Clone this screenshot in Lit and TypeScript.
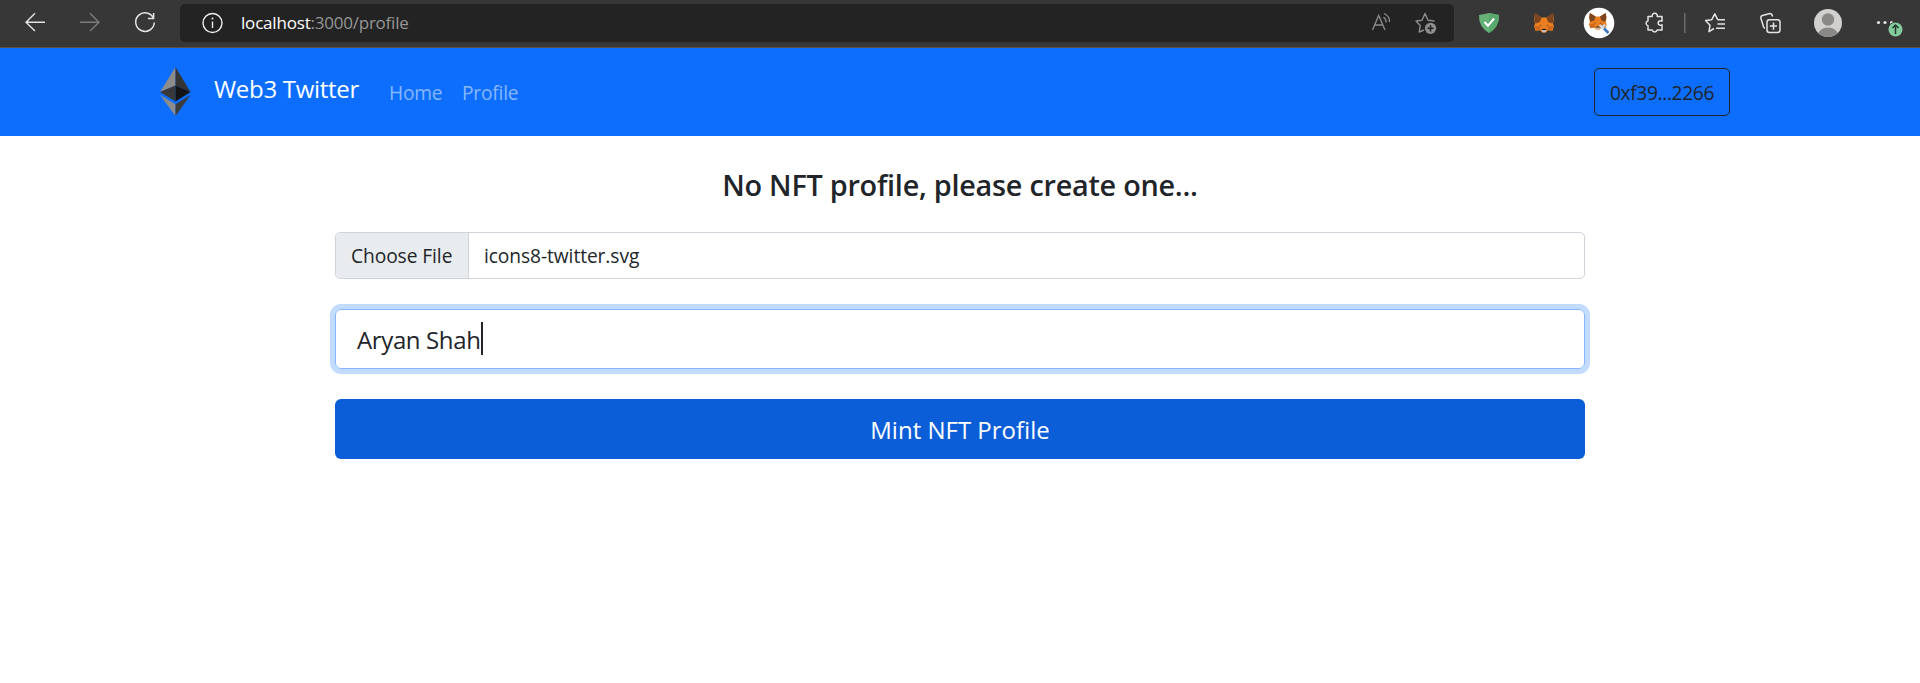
import { LitElement, html, css, svg } from "lit";
import { customElement } from "lit/decorators.js";

const fox = svg`
  <path fill="#ea7f22" d="M1 .5L7.500 4.500h5L19 .5l1 5.500-1 4.500 1 3L18.300 18l-4.500-.8-1.800 2.300H8l-1.800-2.300-4.500.8L0 13.500l1-3L0 6z"/>
  <path fill="#7d4420" d="M1 .5l6.500 4L6 9l-4.500 1.500L.3 6zM19 .5l-6.500 4L14 9l4.500 1.500L19.700 6z"/>
  <path fill="#cf6a1c" d="M.5 13.500L6 12.500l1 4-5.300 1.500zM19.500 13.500L14 12.500l-1 4 5.300 1.500z"/>
  <path fill="#5a3a2a" d="M5.500 11.300l2.300.9-.3.9zM14.500 11.300l-2.300.9.3.9z"/>
  <path fill="#2a2c33" d="M8.300 15.800h3.400l.5 1.500H7.800z"/>
  <path fill="#d0c4ba" d="M7.500 17.300h5l-.8 2H8.300z"/>`;

@customElement("browser-bar")
class BrowserBar extends LitElement {
  static styles = css`
    :host { display: flex; box-sizing: border-box; height: 48px; padding: 4px 0 5px; background: #373737; border-bottom: 1px solid #5c5148; font-family: "Open Sans", "Noto Sans", sans-serif; }
    svg { display: block; overflow: visible; flex: none; }
    .nav { display: flex; width: 180px; padding: 8px 0 0 25px; box-sizing: border-box; gap: 35px; }
    .field { display: flex; width: 1274px; height: 38px; box-sizing: border-box; border-radius: 5px; background: #232323; padding: 8px 18px 0 22px; align-items: flex-start; }
    .url { flex: 1; font-size: 17px; line-height: 25px; margin-left: 18px; margin-top: -2px; color: #969696; white-space: nowrap; }
    .host { color: #fff; letter-spacing: -0.190px; }
    .path { letter-spacing: -0.230px; }
    .read { margin-right: 25px; }
    .tools { display: flex; flex: 1; height: 38px; align-items: center; padding-left: 24px; }
    .shield { margin-right: 34px; }
    .fox { margin-right: 30px; }
    .flask { margin-right: 31px; }
    .puzzle { margin-right: 19px; }
    .rule { margin-right: 19px; }
    .favs { margin-right: 34px; }
    .collections { margin-right: 33px; }
    .avatar { margin-right: 35px; }
  `;
  render() {
    return html`
      <div class="nav">
        <svg width="20" height="20" fill="none" stroke="#e4e4e4" stroke-width="1.400"><path d="M20 10.300H1M10 1.300l-9 9 9 8.800"/></svg>
        <svg width="20" height="20" fill="none" stroke="#7d7d7d" stroke-width="1.400"><path d="M0 10.300h19M10 1.300l9 9-9 8.800"/></svg>
        <svg width="20" height="20" fill="none" stroke="#e4e4e4" stroke-width="1.500"><path d="M18.600 6.500A9.300 9.300 0 1 0 19.300 10.500M18.600 1v5.500h-5.700"/></svg>
      </div>
      <div class="field">
        <svg width="21" height="21" fill="none" stroke="#eee" stroke-width="1.400"><circle cx="10.500" cy="11" r="9.500"/><path d="M10.500 9.500v6.500"/><circle cx="10.500" cy="6.500" r="1" fill="#eee" stroke="none"/></svg>
        <div class="url"><span class="host">localhost</span><span class="path">:3000/profile</span></div>
        <svg class="read" width="18" height="20" fill="none" stroke="#8c8c8c" stroke-width="1.300"><path d="M.5 18L6.700 3.500 13 18M3 13h7.500M11.500 5q3 2.500 2.500 5.500M12 1.500q6 3 5.500 8.500"/></svg>
        <svg width="21" height="22" fill="none" stroke="#8c8c8c" stroke-width="1.400" stroke-linejoin="round"><path d="M9 18l-4.800 2 1-6.500L1 9l6-.8 3-6.700 3 6.700 6.500.8"/><circle cx="15.500" cy="16.300" r="5.600" fill="#8f8f8f" stroke="none"/><path stroke="#232323" stroke-width="1.600" d="M15.500 13.200v6.200M12.400 16.300h6.200"/></svg>
      </div>
      <div class="tools">
        <svg class="shield" width="22" height="20"><path fill="#67b279" d="M1 2Q7 1 11 0q5 1 10 2 .5 12-10 18Q.5 14 1 2z"/><path fill="#5aa96c" d="M11 0q5 1 10 2 .5 12-10 18z"/><path d="M6.500 9l3.500 3.800L16 5.500" fill="none" stroke="#fff" stroke-width="2"/></svg>
        <svg class="fox" width="20" height="20" viewBox="0 0 20 20">${fox}</svg>
        <svg class="flask" width="30" height="30"><circle cx="15" cy="15" r="15.300" fill="#fff"/><g transform="translate(5 4.500) scale(.88)">${fox}</g><path d="M15.500 17l4.500 3.500M17 21l4-4.500" stroke="#d3dfe9" stroke-width="2.200"/><path d="M20 20.500l4.500 4.500" stroke="#3b74c5" stroke-width="2.600"/></svg>
        <svg class="puzzle" width="20" height="20" fill="none" stroke="#e4e4e4" stroke-width="1.500"><path stroke-linejoin="round" d="M3 3.500h4.200a2.600 2.600 0 1 1 5 0H17v4.700a2 2 0 0 0-1.500-.5 2.300 2.300 0 0 0 0 4.600 2 2 0 0 0 1.500-.5V17h-4.800a2.600 2.600 0 0 1-5 0H3v-4.300a2.600 2.600 0 0 1 0-5z"/></svg>
        <svg class="rule" width="2" height="20"><path fill="#6a6a6a" d="M0 0h1.500v20H0z"/></svg>
        <svg class="favs" width="21" height="20" fill="none" stroke="#e4e4e4" stroke-width="1.500" stroke-linejoin="round"><path d="M9 15.500l-5 3.200 1-6.500L.6 7.500l6-.7 3.200-6 3 6M12.800 6.800H20M12.500 11H20M11 15.300h9"/></svg>
        <svg class="collections" width="21" height="20" fill="none" stroke="#e4e4e4" stroke-width="1.500"><rect x="7" y="6.800" width="13" height="12.700" rx="2.500"/><path d="M13.500 9.500v7.200M9.800 13.100H17M5 15.200Q3.500 15 3 12L.9 5.200Q.5 3 2.500 2.400L9 .7q2.700-.6 3.600 2.800"/></svg>
        <svg class="avatar" width="28" height="28"><defs><clipPath id="face"><circle cx="14" cy="14" r="14"/></clipPath></defs><g clip-path="url(#face)"><path fill="#d2d0ce" d="M0 0h28v28H0z"/><circle cx="14" cy="10.500" r="6.200" fill="#8a8886"/><ellipse cx="14" cy="27" rx="10.500" ry="8.500" fill="#8a8886"/></g></svg>
        <svg width="28" height="28"><g fill="#e4e4e4"><circle cx="1.500" cy="13.500" r="1.600"/><circle cx="8" cy="13.500" r="1.600"/><circle cx="14.500" cy="13.500" r="1.600"/></g><circle cx="18.500" cy="20.500" r="7.700" fill="#373737"/><circle cx="18.500" cy="20.500" r="7" fill="#82c99b"/><path d="M18.500 25v-8.500M15.500 19l3-3 3 3" fill="none" stroke="#26392d" stroke-width="1.500"/></svg>
      </div>`;
  }
}

@customElement("app-root")
class AppRoot extends LitElement {
  static styles = css`
    :host { display: block; height: 683px; overflow: hidden; background: #fff; color: #212529; font-family: "Open Sans", "Noto Sans", sans-serif; white-space: nowrap; }
    .bar { display: flex; box-sizing: border-box; height: 88px; background: #0d6efd; padding: 0 190px 0 160px; align-items: flex-start; }
    .logo { display: block; margin: 19px 23px 0 0; }
    .brand { color: #fff; font-size: 24px; line-height: 38px; margin-top: 22px; width: 175px; letter-spacing: -0.300px; }
    .link { color: #86b7fe; font-size: 19.200px; line-height: 30px; margin-top: 30px; letter-spacing: -0.220px; }
    .home { width: 73px; }
    .account { box-sizing: border-box; margin: 20px 0 0 auto; width: 136px; height: 48px; border: 1px solid #212529; border-radius: 5px; text-align: center; font-size: 19.200px; line-height: 48px; letter-spacing: -0.350px; }
    main { width: 1250px; margin: 0 auto; }
    h1 { margin: 31px 0 0; font-size: 28.800px; line-height: 36px; font-weight: 600; text-align: center; letter-spacing: -0.250px; }
    .file { display: flex; box-sizing: border-box; height: 47px; margin-top: 29px; border: 1px solid #ced4da; border-radius: 5px; overflow: hidden; font-size: 19.200px; line-height: 46px; letter-spacing: -0.080px; }
    .choose { box-sizing: border-box; width: 133px; background: #e9ecef; border-right: 1px solid #ced4da; padding-left: 15px; }
    .name { padding-left: 15px; }
    .entry { display: flex; box-sizing: border-box; height: 60px; margin-top: 30px; border: 1px solid #86b7fe; border-radius: 6px; box-shadow: 0 0 0 5px #c2dbfe; padding: 0 21px; font-size: 24px; line-height: 59px; letter-spacing: -0.370px; }
    .caret { width: 2px; height: 33px; margin-top: 12px; background: #212529; }
    .mint { height: 60px; margin-top: 30px; border-radius: 6px; background: #0b5ed7; color: #fff; text-align: center; font-size: 24px; line-height: 61px; }
  `;
  render() {
    return html`
      <browser-bar></browser-bar>
      <nav class="bar">
        <svg class="logo" width="31" height="50" viewBox="0 0 31 50"><path fill="#8c8c8c" d="M15.500 0v18.400L0 25z"/><path fill="#343434" d="M15.500 0v18.400L30.500 25z"/><path fill="#393939" d="M15.500 18.400V34.500L0 25z"/><path fill="#141414" d="M15.500 18.400V34.500L30.500 25z"/><path fill="#8c8c8c" d="M0 28l15.500 9.200V49z"/><path fill="#3c3c3b" d="M30.500 28l-15 9.200V49z"/></svg>
        <div class="brand">Web3 Twitter</div>
        <div class="link home">Home</div>
        <div class="link">Profile</div>
        <div class="account">0xf39...2266</div>
      </nav>
      <main>
        <h1>No NFT profile, please create one...</h1>
        <div class="file"><div class="choose">Choose File</div><div class="name">icons8-twitter.svg</div></div>
        <div class="entry"><span>Aryan Shah</span><div class="caret"></div></div>
        <div class="mint">Mint NFT Profile</div>
      </main>`;
  }
}
